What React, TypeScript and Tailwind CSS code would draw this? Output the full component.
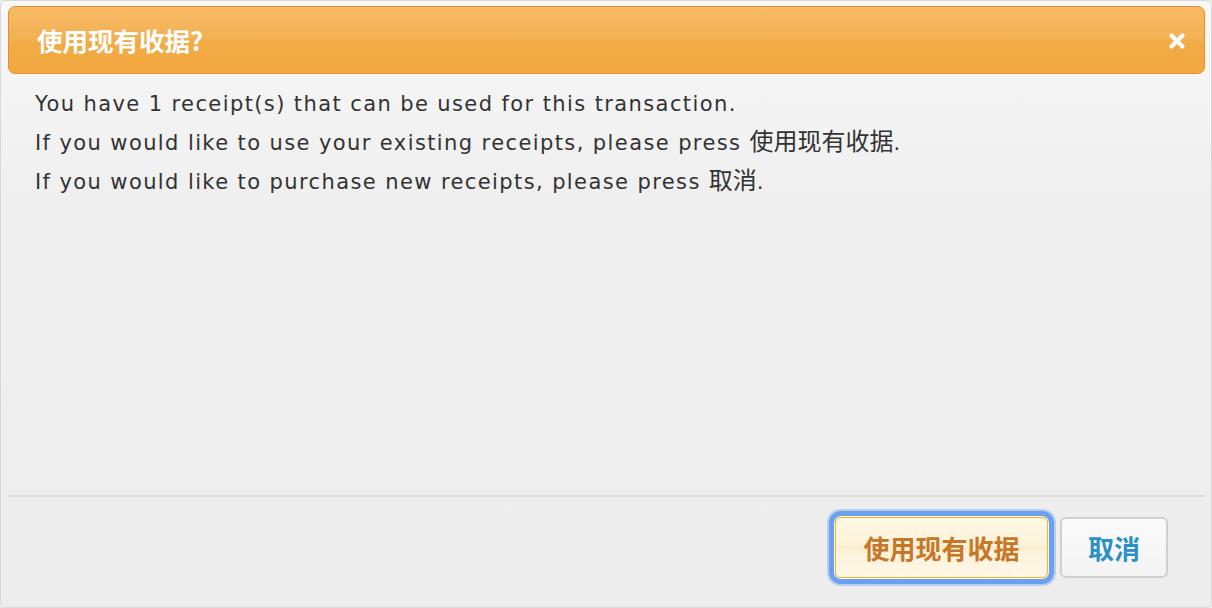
import React from "react";

const cjk = "font-['Noto_Sans_CJK_SC',sans-serif]";

export default function App() {
  return (
    <div className="w-[1212px] h-[608px] bg-[#eeeeee]">
      <div className="h-full flex flex-col rounded-[5px] border border-[#d9d9d9] bg-[linear-gradient(to_bottom,#f8f8f8_0px,#efefef_200px,#ededed_100%)] pt-[5px] px-[7px] pr-[6px]">
        <div className="h-[68px] shrink-0 flex items-center justify-between rounded-[7px] border border-[#e5912b] bg-[linear-gradient(to_bottom,#f6b964_0%,#f4b256_45%,#f2aa45_55%,#f2a940_100%)] pl-[28px] pr-[18px]">
          <span className={`${cjk} text-[25.5px] font-bold text-white leading-none`}>使用现有收据?</span>
          <svg width="18" height="18" viewBox="0 0 18 18" className="mt-[2px]">
            <path d="M3.5 3.5 L14.5 14.5 M14.5 3.5 L3.5 14.5" stroke="#ffffff" strokeWidth="4.2" strokeLinecap="round" />
          </svg>
        </div>
        <div className="flex-1 pl-[27px] pt-[11px] font-['DejaVu_Sans',sans-serif] text-[21px] tracking-[1.4px] leading-[39px] text-[#333333]">
          <div>You have 1 receipt(s) that can be used for this transaction.</div>
          <div>
            If you would like to use your existing receipts, please press{" "}
            <span className={`${cjk} text-[24px] leading-[20px] tracking-normal`}>使用现有收据</span>.
          </div>
          <div>
            If you would like to purchase new receipts, please press{" "}
            <span className={`${cjk} text-[24px] leading-[20px] tracking-normal`}>取消</span>.
          </div>
        </div>
        <div className="h-[112px] shrink-0 border-t-2 border-[#dcdcdc] flex justify-end items-start pt-[20px] pr-[37px] gap-[12px]">
          <button className="w-[213px] h-[61px] rounded-[6px] border border-[#f0b630] bg-[linear-gradient(to_bottom,#fff8e6_0%,#fdf3da_45%,#fbeccb_50%,#fdf3dc_60%,#fef7e6_100%)] shadow-[0_0_0_1px_#fff4d6,0_0_0_6px_#6aa0ee,0_0_0_8px_rgba(120,168,240,0.45)]">
            <span className={`${cjk} text-[26px] font-bold text-[#c67728]`}>使用现有收据</span>
          </button>
          <button className="w-[108px] h-[61px] rounded-[6px] border-2 border-[#cfcfcf] bg-[linear-gradient(to_bottom,#fbfbfb,#f3f3f3)]">
            <span className={`${cjk} text-[26px] font-bold text-[#2a90c6]`}>取消</span>
          </button>
        </div>
      </div>
    </div>
  );
}
